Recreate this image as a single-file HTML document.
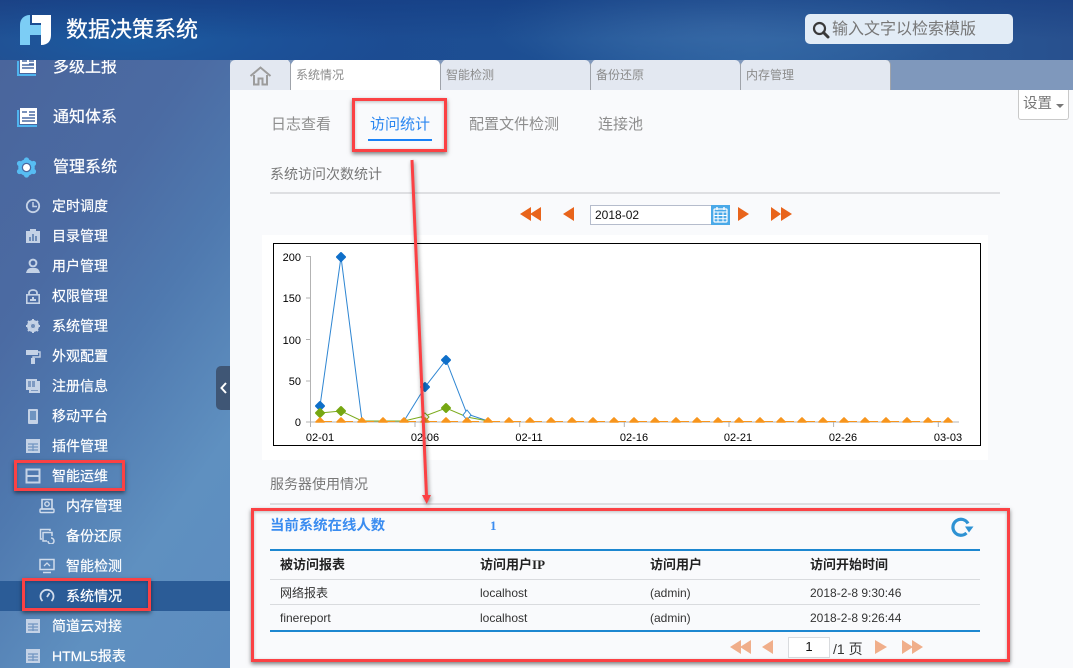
<!DOCTYPE html>
<html lang="zh"><head><meta charset="utf-8"><style>
html,body{margin:0;padding:0}
body{width:1073px;height:668px;overflow:hidden;position:relative;background:#f9fafc;font-family:"Liberation Sans","Noto Sans CJK SC",sans-serif}
.a{position:absolute;white-space:nowrap}
.t{position:absolute;white-space:nowrap;line-height:20px;height:20px}
.side{position:absolute;left:0;top:60px;width:230px;height:608px;overflow:hidden;background:linear-gradient(125deg,#4a659c 0%,#4b6ba3 30%,#4f79af 50%,#5f90c0 75%,#5c8cbf 100%)}
.w{color:#fff;position:absolute;white-space:nowrap;line-height:20px;height:20px;-webkit-text-stroke:.2px #fff}
.m{font-size:16px;left:53px}.s{font-size:14px;left:52px}.d{font-size:14px;left:66px}
.ic{position:absolute}
.tab{position:absolute;top:60px;height:30px;width:149px;background:#e3e8f1;border-left:1px solid #9fa3aa;border-radius:5px 5px 0 0;color:#8b8b8b;font-size:12px;line-height:30px;box-sizing:content-box}
.tab span{margin-left:5px}
.tri{position:absolute;top:60px;width:0;height:0;border-left:3px solid transparent;border-right:3px solid transparent;border-top:4px solid #7f98bc}
.red{position:absolute;border:3px solid #fb4144;box-sizing:border-box;box-shadow:0 2px 4px rgba(0,0,0,.5),inset 0 1px 3px rgba(0,0,0,.25)}
.hl{position:absolute;height:2px}
.cell{position:absolute;font-size:12px;color:#333;line-height:20px;white-space:nowrap}
.th{position:absolute;font-size:13px;font-weight:700;color:#222;line-height:20px;white-space:nowrap}
</style></head><body>
<div class="a" style="left:0;top:0;width:1073px;height:60px;background:linear-gradient(180deg,rgba(15,50,120,.4),rgba(15,50,120,0) 65%),radial-gradient(ellipse 260px 60px at 130px 40px,#1b5aa0 0%,rgba(27,90,160,0) 100%),radial-gradient(ellipse 240px 60px at 730px 25px,#3769a6 0%,rgba(55,105,166,0) 100%),linear-gradient(90deg,#254b8c 0%,#1c4a92 25%,#1d4f93 50%,#2b619f 70%,#28508e 100%)"></div>
<svg class="a" style="left:20px;top:15px" width="31" height="30" viewBox="0 0 31 30"><path d="M0 30V10C0 4 4 0 10 0V10H21V20H10V30Z" fill="#7ccdf5"/><path d="M12 0H31V20C31 26 28 30 21 30V8H12Z" fill="#fff"/></svg>
<div class="t" style="left:66px;top:19px;font-size:22px;line-height:22px;color:#fff;-webkit-text-stroke:.25px #fff">数据决策系统</div>
<div class="a" style="left:805px;top:14px;width:208px;height:30px;background:#e2ecf6;border-radius:5px"></div>
<svg class="a" style="left:812px;top:21px" width="18" height="18" viewBox="0 0 18 18"><circle cx="7.5" cy="7.5" r="5.5" fill="none" stroke="#3a3a3a" stroke-width="2.2"/><path d="M11.5 11.5L16 16" stroke="#3a3a3a" stroke-width="3" stroke-linecap="round"/></svg>
<div class="t" style="left:832px;top:20px;font-size:16px;color:#777">输入文字以检索模版</div>

<div class="side">
<div class="a" style="left:0;top:521px;width:230px;height:30px;background:#2b5c97"></div>
<svg class="ic" style="left:16px;top:-3px" width="22" height="20" viewBox="0 0 22 20"><path d="M1 4V19H20V17H3V4Z" fill="#4fb4ef"/><rect x="4" y="0" width="16" height="16" fill="#fff"/><path d="M6 4H11M13 4H18M13 7H18M6 8H18M6 11H18" stroke="#4b6ba3" stroke-width="1.4"/></svg>
<div class="w m" style="top:-2px">多级上报</div>
<svg class="ic" style="left:16px;top:47px" width="22" height="21" viewBox="0 0 22 21"><path d="M1 3V20H21V18H3V3Z" fill="#4fb4ef"/><rect x="4" y="1" width="17" height="16" fill="#fff"/><path d="M6 5H11M13 5H19M13 8H19M6 11H19M6 14H19" stroke="#4b6ba3" stroke-width="1.4"/></svg>
<div class="w m" style="top:48px">通知体系</div>
<svg class="ic" style="left:16px;top:97px" width="21" height="21" viewBox="0 0 21 21"><circle cx="10.5" cy="10.5" r="6.5" fill="none" stroke="#57bdf3" stroke-width="3.5"/><circle cx="10.5" cy="3" r="2.6" fill="#57bdf3"/><circle cx="10.5" cy="18" r="2.6" fill="#57bdf3"/><circle cx="3.5" cy="6.5" r="2.6" fill="#57bdf3"/><circle cx="17.5" cy="6.5" r="2.6" fill="#57bdf3"/><circle cx="3.5" cy="14.500" r="2.6" fill="#57bdf3"/><circle cx="17.5" cy="14.500" r="2.6" fill="#57bdf3"/><circle cx="10.5" cy="10.5" r="3.500" fill="#fff"/></svg>
<div class="w m" style="top:98px">管理系统</div>

<svg class="ic" style="left:25px;top:138px" width="16" height="16" viewBox="0 0 16 16"><circle cx="8" cy="8" r="6.2" fill="none" stroke="#c4d2e6" stroke-width="1.8"/><path d="M8 4V8.5H12" fill="none" stroke="#c4d2e6" stroke-width="1.5"/></svg>
<div class="w s" style="top:136px">定时调度</div>
<svg class="ic" style="left:25px;top:168px" width="16" height="16" viewBox="0 0 16 16"><path d="M1 3H5V1H11V3H15V15H1Z" fill="#c4d2e6"/><path d="M4 13V9H6V13ZM7 13V6H9V13ZM10 13V8H12V13Z" fill="#6f8db8"/></svg>
<div class="w s" style="top:166px">目录管理</div>
<svg class="ic" style="left:25px;top:198px" width="16" height="16" viewBox="0 0 16 16"><circle cx="8" cy="5" r="3.4" fill="none" stroke="#c4d2e6" stroke-width="2"/><path d="M1 15C2 11 4 10 6 10H10C12 10 14 11 15 15Z" fill="#c4d2e6"/></svg>
<div class="w s" style="top:196px">用户管理</div>
<svg class="ic" style="left:25px;top:228px" width="16" height="16" viewBox="0 0 16 16"><path d="M4 7V5C4 1 12 1 12 5V7" fill="none" stroke="#c4d2e6" stroke-width="1.8"/><rect x="1.8" y="6.8" width="12.4" height="8.4" fill="none" stroke="#c4d2e6" stroke-width="1.6"/><path d="M5 13V11H7V9H9V11H11V13Z" fill="#c4d2e6"/></svg>
<div class="w s" style="top:226px">权限管理</div>
<svg class="ic" style="left:25px;top:258px" width="16" height="16" viewBox="0 0 16 16"><circle cx="8" cy="8" r="4.5" fill="none" stroke="#c4d2e6" stroke-width="3"/><path d="M8 1V15M1 8H15M3 3L13 13M13 3L3 13" stroke="#c4d2e6" stroke-width="2"/><circle cx="8" cy="8" r="2" fill="#6f8db8"/></svg>
<div class="w s" style="top:256px">系统管理</div>
<svg class="ic" style="left:25px;top:288px" width="16" height="16" viewBox="0 0 16 16"><path d="M1 2H13V7H1Z" fill="#c4d2e6"/><path d="M13 4H15V9H8V11" fill="none" stroke="#c4d2e6" stroke-width="1.4"/><rect x="6" y="10" width="4" height="6" fill="#c4d2e6"/></svg>
<div class="w s" style="top:286px">外观配置</div>
<svg class="ic" style="left:25px;top:318px" width="16" height="16" viewBox="0 0 16 16"><path d="M1 1H12V3H15V15H4V12H1Z" fill="#c4d2e6"/><path d="M3 3H10V9H3ZM6 12H13V13H6Z" fill="#7e9ac2"/><path d="M6.5 3V9" stroke="#c4d2e6"/></svg>
<div class="w s" style="top:316px">注册信息</div>
<svg class="ic" style="left:25px;top:348px" width="16" height="16" viewBox="0 0 16 16"><rect x="3" y="1" width="10" height="15" rx="1" fill="#c4d2e6"/><rect x="5" y="3" width="6" height="9" fill="#6f94c0"/></svg>
<div class="w s" style="top:346px">移动平台</div>
<svg class="ic" style="left:25px;top:378px" width="16" height="16" viewBox="0 0 16 16"><rect x="1" y="1" width="14" height="14" fill="#c4d2e6"/><path d="M3 6H13M3 9H13M3 12H13M8 6V13" stroke="#6f94c0" stroke-width="1.2"/></svg>
<div class="w s" style="top:376px">插件管理</div>
<svg class="ic" style="left:25px;top:408px" width="16" height="16" viewBox="0 0 16 16"><rect x="1.5" y="1.5" width="13" height="13" fill="none" stroke="#c4d2e6" stroke-width="2"/><path d="M2 8H14" stroke="#c4d2e6" stroke-width="2"/></svg>
<div class="w s" style="top:406px">智能运维</div>
<svg class="ic" style="left:39px;top:438px" width="16" height="16" viewBox="0 0 16 16"><path d="M3 1.5H13V11H3Z" fill="none" stroke="#d0dcec" stroke-width="1.6"/><circle cx="8" cy="6" r="2.2" fill="none" stroke="#d0dcec" stroke-width="1.4"/><rect x="1" y="11" width="14" height="3.5" rx="1" fill="none" stroke="#d0dcec" stroke-width="1.4"/></svg>
<div class="w d" style="top:436px">内存管理</div>
<svg class="ic" style="left:39px;top:468px" width="16" height="16" viewBox="0 0 16 16"><path d="M3 11H1.5V1.5H11V3" fill="none" stroke="#d0dcec" stroke-width="1.5"/><path d="M8 13H4V4.5H13V8" fill="none" stroke="#d0dcec" stroke-width="1.5"/><path d="M9 13A3 3 0 1 0 12 10" fill="none" stroke="#d0dcec" stroke-width="1.5"/></svg>
<div class="w d" style="top:466px">备份还原</div>
<svg class="ic" style="left:39px;top:498px" width="16" height="16" viewBox="0 0 16 16"><rect x="1" y="1.5" width="14" height="10" fill="none" stroke="#d0dcec" stroke-width="1.5"/><path d="M5 8L8 5L11 8" fill="none" stroke="#d0dcec" stroke-width="1.3"/><path d="M4 14.5H12" stroke="#d0dcec" stroke-width="1.5"/></svg>
<div class="w d" style="top:496px">智能检测</div>
<svg class="ic" style="left:39px;top:528px" width="16" height="16" viewBox="0 0 16 16"><path d="M3.5 13A6.5 6.5 0 1 1 12.5 13" fill="none" stroke="#d0dcec" stroke-width="1.8"/><path d="M8 9L10.5 5" stroke="#d0dcec" stroke-width="1.8"/></svg>
<div class="w d" style="top:526px">系统情况</div>
<svg class="ic" style="left:25px;top:558px" width="16" height="16" viewBox="0 0 16 16"><rect x="1" y="1" width="14" height="14" fill="#c4d2e6"/><path d="M3 6H13M3 9H13M3 12H13M8 6V13" stroke="#6f94c0" stroke-width="1.2"/></svg>
<div class="w s" style="top:556px">简道云对接</div>
<svg class="ic" style="left:25px;top:588px" width="16" height="16" viewBox="0 0 16 16"><rect x="1" y="1" width="14" height="14" fill="#c4d2e6"/><path d="M3 6H13M3 9H13M3 12H13M8 6V13" stroke="#6f94c0" stroke-width="1.2"/></svg>
<div class="w s" style="top:586px">HTML5报表</div>
</div>
<div class="a" style="left:216px;top:366px;width:14px;height:44px;background:#3f5675;border-radius:5px 0 0 5px"></div>
<svg class="a" style="left:219px;top:381px" width="9" height="14" viewBox="0 0 9 14"><path d="M7 2L2.5 7L7 12" fill="none" stroke="#fff" stroke-width="2"/></svg>

<div class="a" style="left:230px;top:60px;width:843px;height:30px;background:#7f98bc"></div>
<div class="a" style="left:230px;top:60px;width:60px;height:30px;background:#e3e8f1;border-radius:5px 0 0 0"></div>
<svg class="a" style="left:249px;top:66px" width="23" height="20" viewBox="0 0 23 20"><path d="M1.5 10L11.5 1.5L21.5 10" fill="none" stroke="#9c9c9c" stroke-width="2"/><path d="M5 9V18.5H9.5V12.5H13.5V18.5H18V9" fill="none" stroke="#9c9c9c" stroke-width="2"/></svg>
<div class="tab" style="left:290px;background:#fff"><span>系统情况</span></div>
<div class="tab" style="left:440px"><span>智能检测</span></div>
<div class="tab" style="left:590px"><span>备份还原</span></div>
<div class="tab" style="left:740px;border-right:1px solid #9fa3aa"><span>内存管理</span></div>
<div class="tri" style="left:288px"></div><div class="tri" style="left:438px"></div><div class="tri" style="left:588px"></div><div class="tri" style="left:738px"></div>

<div class="a" style="left:1018px;top:90px;width:51px;height:30px;box-sizing:border-box;background:#fff;border:1px solid #c9c9c9;border-top:0;border-radius:0 0 3px 3px"></div>
<div class="t" style="left:1023px;top:94px;font-size:14.5px;color:#777">设置</div>
<div class="a" style="left:1056px;top:104px;border-left:4px solid transparent;border-right:4px solid transparent;border-top:4px solid #777"></div>

<div class="t" style="left:271px;top:115px;font-size:15px;color:#8d8d8d">日志查看</div>
<div class="t" style="left:370px;top:115px;font-size:15px;color:#2a86f0">访问统计</div>
<div class="a" style="left:368px;top:139px;width:64px;height:2px;background:#1a82f7"></div>
<div class="t" style="left:469px;top:115px;font-size:15px;color:#8d8d8d">配置文件检测</div>
<div class="t" style="left:598px;top:115px;font-size:15px;color:#8d8d8d">连接池</div>

<div class="t" style="left:270px;top:164px;font-size:14px;color:#777">系统访问次数统计</div>
<div class="hl" style="left:270px;top:192px;width:730px;background:#dedfe2"></div>

<svg class="a" style="left:515px;top:205px" width="285" height="20" viewBox="515 205 285 20" fill="#e8641b"><path d="M520 214L531 207V221ZM530 214L541 207V221Z"/><path d="M563 214L574 207V221Z"/><path d="M749 214L738 207V221Z"/><path d="M781 214L771 207V221ZM792 214L781 207V221Z"/></svg>
<div class="a" style="left:590px;top:205px;width:122px;height:20px;box-sizing:border-box;background:#fff;border:1px solid #b5bccc;font-size:12px;line-height:18px;color:#111;padding-left:4px">2018-02</div>
<svg class="a" style="left:711px;top:205px" width="19" height="20" viewBox="0 0 19 20"><rect width="19" height="20" fill="#4aa9e8"/><rect x="3" y="4" width="13" height="13" rx="1" fill="none" stroke="#fff" stroke-width="1.2"/><path d="M3 7H16M3 10.5H16M3 13.7H16M7 7V17M12 7V17" stroke="#fff" stroke-width="1"/><path d="M6 2V5M13 2V5" stroke="#fff" stroke-width="1.4"/></svg>

<div class="a" style="left:262px;top:235px;width:726px;height:225px;background:#fff"></div>
<svg class="a" style="left:262px;top:235px" width="726" height="225" viewBox="262 235 726 225" font-family="Liberation Sans,sans-serif" font-size="11" fill="#000">
<rect x="273.5" y="243.5" width="707" height="202" fill="#fff" stroke="#000"/>
<path d="M310.5 256V422M306 256.5H310.5M306 298H310.5M306 339.5H310.5M306 381H310.5M306 422H959M310.5 422V427M415 422V427M519.7 422V427M624.3 422V427M729 422V427M833.6 422V427M938.3 422V427" fill="none" stroke="#b3b3b3"/>
<g text-anchor="end"><text x="301" y="261">200</text><text x="301" y="302">150</text><text x="301" y="344">100</text><text x="301" y="385">50</text><text x="301" y="426">0</text></g>
<g text-anchor="middle"><text x="320" y="441">02-01</text><text x="425" y="441">02-06</text><text x="529" y="441">02-11</text><text x="634" y="441">02-16</text><text x="738" y="441">02-21</text><text x="843" y="441">02-26</text><text x="948" y="441">03-03</text></g>
<path d="M320 406L341 257L362 421H404L425 387L446 360L467 414L488 421" fill="none" stroke="#2f86d2" stroke-width="1"/>
<path d="M320 413L341 411L362 421H404L425 416L446 408L467 417L488 421" fill="none" stroke="#7cab1d" stroke-width="1"/>
<path d="M320 421.5H948" fill="none" stroke="#f7951d" stroke-width="1" stroke-dasharray="12 9"/>
<g fill="#0f6fc9" stroke="#0f6fc9" stroke-width="2" stroke-linejoin="round"><path d="M320 402L324 406L320 410L316 406Z"/><path d="M341 253L345 257L341 261L337 257Z"/><path d="M425 383L429 387L425 391L421 387Z"/><path d="M446 356L450 360L446 364L442 360Z"/></g>
<path d="M467 410L471 415L467 420L463 415Z" fill="#fff" stroke="#2f86d2"/>
<g fill="#76a712" stroke="#76a712" stroke-width="2" stroke-linejoin="round"><path d="M320 409L324 413L320 417L316 413Z"/><path d="M341 407L345 411L341 415L337 411Z"/><path d="M446 404L450 408L446 412L442 408Z"/></g>
<path d="M425 413L429 417L425 421L421 417Z" fill="#fff" stroke="#7cab1d"/>
<path fill="#f7951d" stroke="#f7951d" stroke-width="1.6" stroke-linejoin="round" d="M320 418L324 422H316ZM341 418L345 422H337ZM362 418L366 422H358ZM383 418L387 422H379ZM404 418L408 422H400ZM425 418L429 422H421ZM446 418L450 422H442ZM467 418L471 422H463ZM488 418L492 422H484ZM509 418L513 422H505ZM530 418L534 422H526ZM551 418L555 422H547ZM572 418L576 422H568ZM593 418L597 422H589ZM614 418L618 422H610ZM634 418L638 422H630ZM655 418L659 422H651ZM676 418L680 422H672ZM697 418L701 422H693ZM718 418L722 422H714ZM739 418L743 422H735ZM760 418L764 422H756ZM781 418L785 422H777ZM802 418L806 422H798ZM823 418L827 422H819ZM844 418L848 422H840ZM865 418L869 422H861ZM886 418L890 422H882ZM907 418L911 422H903ZM928 418L932 422H924ZM948 418L952 422H944Z"/>
</svg>

<div class="t" style="left:270px;top:474px;font-size:14px;color:#777">服务器使用情况</div>
<div class="hl" style="left:270px;top:503px;width:730px;background:#dedfe2"></div>

<div class="t" style="left:270px;top:516px;font-size:14.4px;font-weight:700;color:#3a8cf0">当前系统在线人数</div>
<div class="t" style="left:490px;top:516px;font-size:13px;font-family:'Liberation Serif',serif;font-weight:700;color:#3a8cf0">1</div>
<svg class="a" style="left:950px;top:516px" width="24" height="22" viewBox="0 0 24 22"><path d="M18 7.500A8 8 0 1 0 16.500 17" fill="none" stroke="#2e92d3" stroke-width="3.200"/><path d="M15 10.500H23.500L19 16.500Z" fill="#2e92d3"/></svg>

<div class="a" style="left:270px;top:549px;width:710px;height:2px;background:#1d87d0"></div>
<div class="a" style="left:270px;top:579px;width:710px;height:1px;background:#d9dbde"></div>
<div class="a" style="left:270px;top:604px;width:710px;height:1px;background:#d9dbde"></div>
<div class="a" style="left:270px;top:630px;width:710px;height:2px;background:#1d87d0"></div>
<div class="th" style="left:280px;top:555px">被访问报表</div>
<div class="th" style="left:480px;top:555px">访问用户<span style="font-family:'Liberation Serif',serif">IP</span></div>
<div class="th" style="left:650px;top:555px">访问用户</div>
<div class="th" style="left:810px;top:555px">访问开始时间</div>
<div class="cell" style="left:280px;top:583px">网络报表</div>
<div class="cell" style="left:480px;top:583px">localhost</div>
<div class="cell" style="left:650px;top:583px">(admin)</div>
<div class="cell" style="left:810px;top:583px">2018-2-8 9:30:46</div>
<div class="cell" style="left:280px;top:608px">finereport</div>
<div class="cell" style="left:480px;top:608px">localhost</div>
<div class="cell" style="left:650px;top:608px">(admin)</div>
<div class="cell" style="left:810px;top:608px">2018-2-8 9:26:44</div>

<svg class="a" style="left:725px;top:637px" width="205" height="20" viewBox="725 637 205 20" fill="#f0ae8a"><path d="M730 647L741 640V654ZM740 647L751 640V654Z"/><path d="M762 647L773 640V654Z"/><path d="M887 647L875 640V654Z"/><path d="M913 647L902 640V654ZM923 647L912 640V654Z"/></svg>
<div class="a" style="left:788px;top:637px;width:42px;height:21px;box-sizing:border-box;background:#fff;border:1px solid #d9dbde;font-size:13px;line-height:18px;text-align:center;color:#111">1</div>
<div class="t" style="left:833px;top:639px;font-size:14px;color:#333">/1 页</div>

<div class="red" style="left:352px;top:98px;width:95px;height:54px"></div>
<div class="red" style="left:14px;top:460px;width:111px;height:31px"></div>
<div class="red" style="left:22px;top:578px;width:129px;height:33px"></div>
<div class="red" style="left:251px;top:508px;width:759px;height:154px"></div>
<svg class="a" style="left:400px;top:155px;filter:drop-shadow(1px 2px 2px rgba(0,0,0,.45))" width="40" height="355" viewBox="400 155 40 355"><path d="M412 160L426.500 496" fill="none" stroke="#fb4144" stroke-width="3"/><path d="M422 495H431L426.700 504Z" fill="#fb4144"/></svg>
</body></html>
